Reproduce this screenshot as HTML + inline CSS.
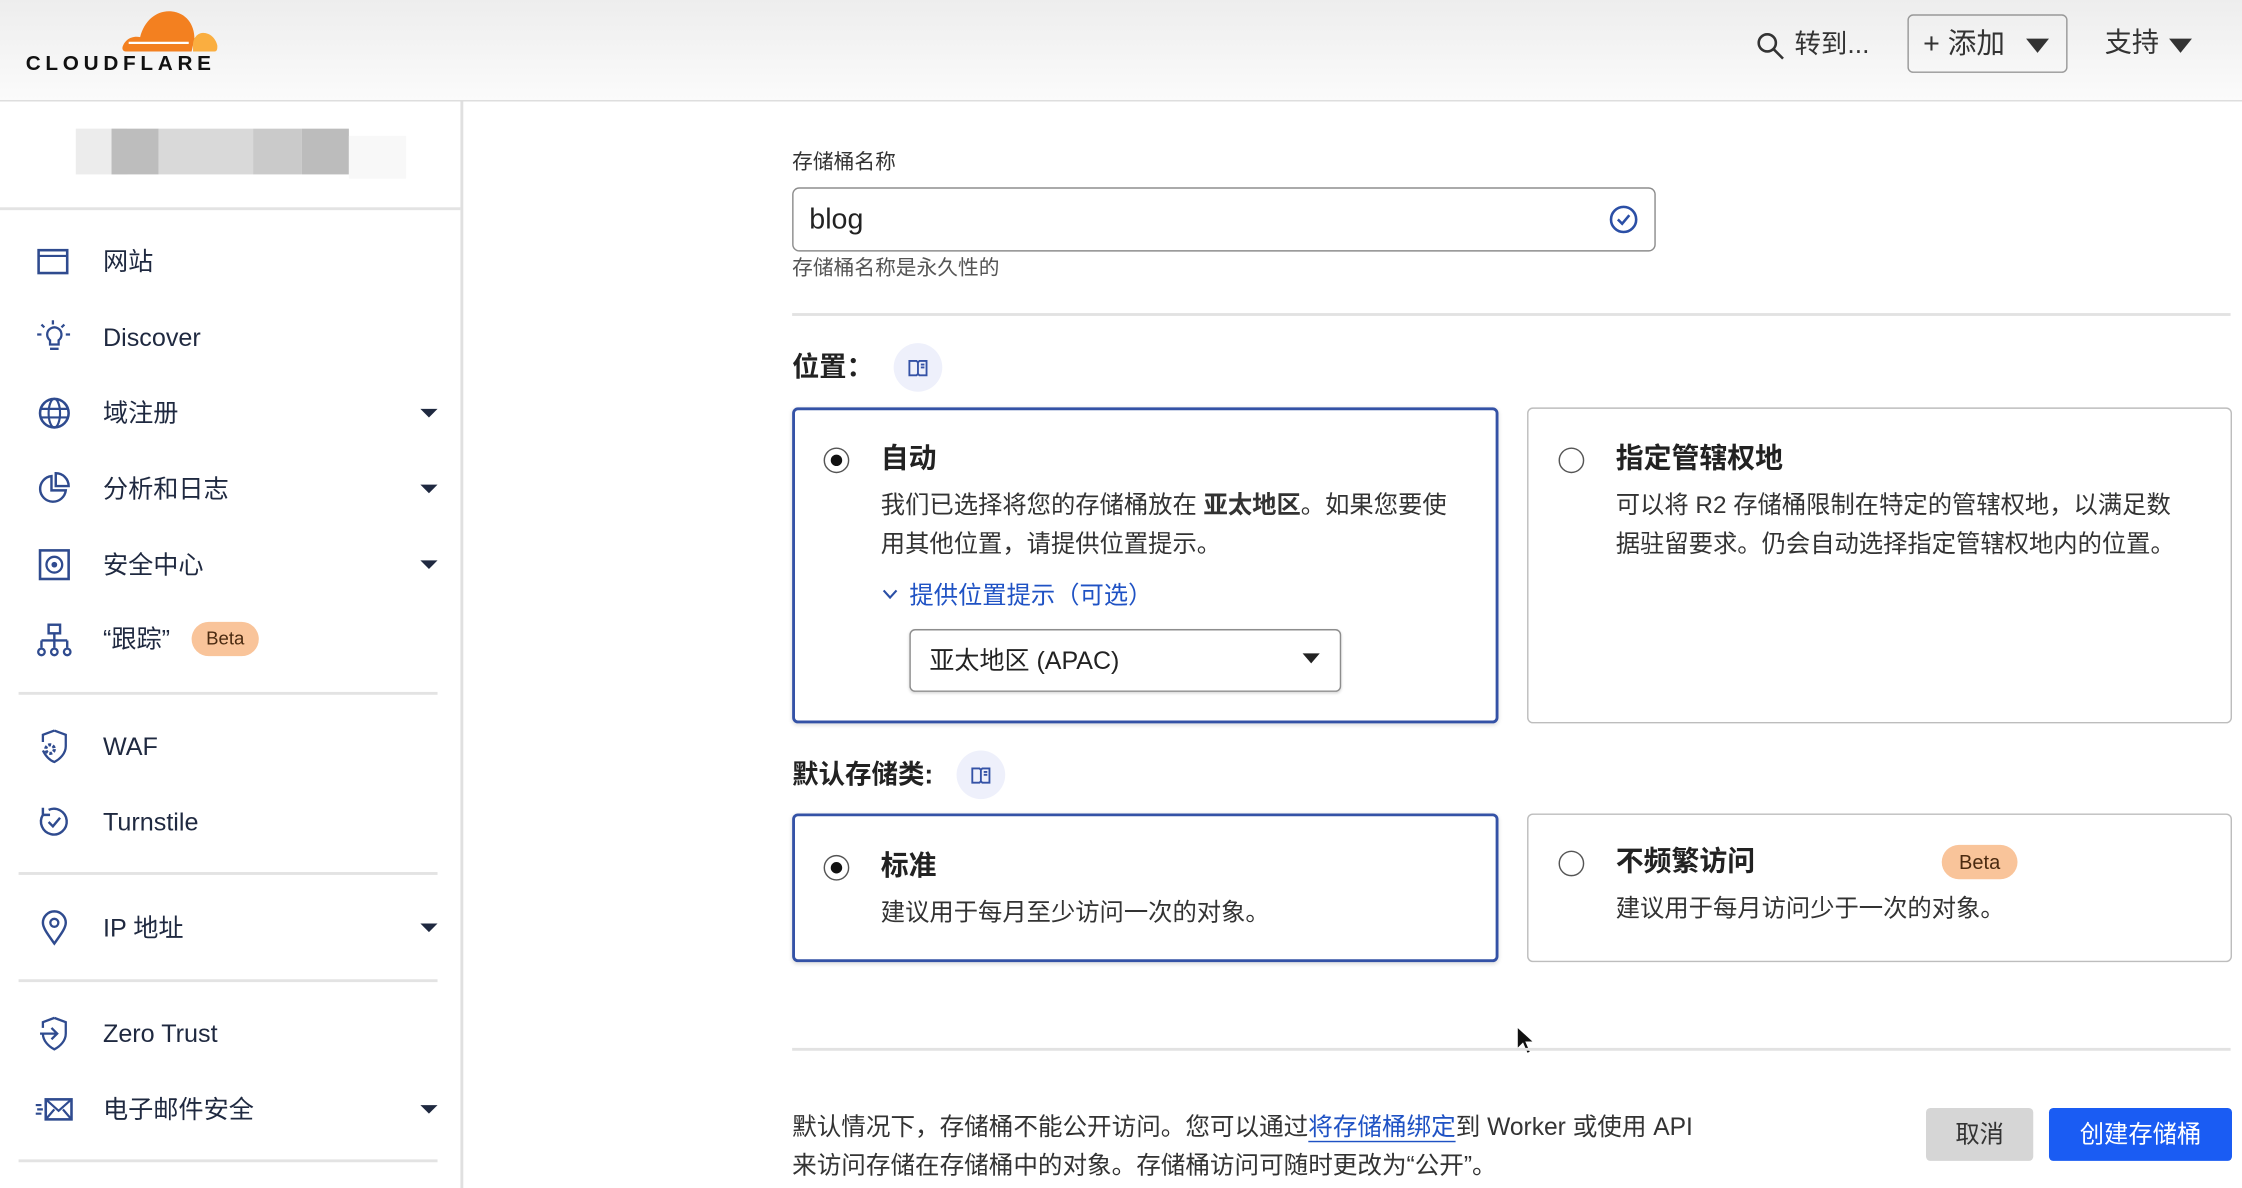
<!DOCTYPE html>
<html><head><meta charset="utf-8">
<style>
html,body{margin:0;padding:0;width:2242px;height:1188px;overflow:hidden;background:#fff}
#w{position:absolute;left:0;top:0;width:1568px;height:831px;transform:scale(1.42985,1.42960);transform-origin:0 0;font-family:"Liberation Sans","Noto Sans CJK SC",sans-serif;color:#222}
.a{position:absolute}
.t{position:absolute;height:30px;line-height:30px;white-space:nowrap}
.nav{left:72px;font-size:17.6px;color:#1f2940}
.ic{position:absolute;left:25px;width:26px;height:26px}
.car{position:absolute;left:294px;width:0;height:0;border-left:6px solid transparent;border-right:6px solid transparent;border-top:6px solid #1f2940}
.div{position:absolute;left:13px;width:293px;height:2px;background:#e3e3e3}
.card{position:absolute;border:1.5px solid #bdbdbd;border-radius:4px;box-sizing:border-box}
.sel{border:2px solid #3452a6;box-shadow:0 1px 3px rgba(0,0,0,.15)}
.radio{position:absolute;width:18px;height:18px;border:1.5px solid #555;border-radius:50%;box-sizing:border-box}
.radio.on::after{content:"";position:absolute;left:3.5px;top:3.5px;width:8px;height:8px;border-radius:50%;background:#111}
.bk{position:absolute;width:34px;height:34px;border-radius:50%;background:#eef0fb}
.p{font-size:17px;color:#333}
</style></head><body><div id="w">
<!-- header -->
<div class="a" style="left:0;top:0;width:1568px;height:70px;background:linear-gradient(#ededed,#fbfbfb);border-bottom:1.5px solid #dcdcdc"></div>
<svg class="a" style="left:84px;top:3px" width="70" height="34" viewBox="0 0 70 34">
<path d="M46 33 H4 C2 33 1 31 2 29 C4 24 9 22 14 23 C17 11 26 4 36 5 C46 6 52 14 52 24 L50 33 Z" fill="#f38020"/>
<path d="M51 33 H66 C68 33 68 31 68 29 C67 24 63 20 58 20 C54 20 51 24 51 28 Z" fill="#faae40"/>
<path d="M6 27 H48" stroke="#fff" stroke-width="1.6"/>
</svg>
<div class="t" style="left:18px;top:30px;font-size:14.5px;font-weight:bold;letter-spacing:3.3px;color:#111">CLOUDFLARE</div>
<svg class="a" style="left:1228px;top:22px" width="22" height="22" viewBox="0 0 22 22"><circle cx="8" cy="8" r="6" fill="none" stroke="#333" stroke-width="1.8"/><path d="M12.5 12.5 L19 19" stroke="#333" stroke-width="1.8"/></svg>
<div class="t" style="left:1255px;top:16px;font-size:18.5px;color:#333">转到...</div>
<div class="a" style="left:1334px;top:10px;width:112px;height:41px;border:1.5px solid #999;border-radius:4px;box-sizing:border-box"></div>
<div class="t" style="left:1345px;top:16px;font-size:20px;color:#333">+ 添加</div>
<div class="a" style="left:1417px;top:27px;border-left:8px solid transparent;border-right:8px solid transparent;border-top:10px solid #333"></div>
<div class="t" style="left:1472px;top:16px;font-size:19px;color:#333">支持</div>
<div class="a" style="left:1517px;top:27px;border-left:8px solid transparent;border-right:8px solid transparent;border-top:10px solid #333"></div>
<!-- sidebar -->
<div class="a" style="left:322px;top:71px;width:2px;height:760px;background:#e0e0e0"></div>
<div class="a" style="left:53px;top:90px;width:36px;height:32px;background:#ececec"></div>
<div class="a" style="left:78px;top:90px;width:33px;height:32px;background:#bdbdbd"></div>
<div class="a" style="left:111px;top:90px;width:66px;height:32px;background:#d9d9d9"></div>
<div class="a" style="left:177px;top:90px;width:34px;height:32px;background:#cacaca"></div>
<div class="a" style="left:211px;top:90px;width:33px;height:32px;background:#bcbcbc"></div>
<div class="a" style="left:244px;top:95px;width:40px;height:30px;background:#f8f8f8"></div>
<div class="a" style="left:0;top:145px;width:322px;height:2px;background:#e3e3e3"></div>

<svg class="ic" style="top:170px" viewBox="0 0 26 26"><rect x="2" y="5" width="20" height="16" fill="none" stroke="#2f4b8f" stroke-width="1.8"/><path d="M2 9 H22" stroke="#2f4b8f" stroke-width="1.5"/></svg>
<div class="t nav" style="top:168px">网站</div>
<svg class="ic" style="top:223px" viewBox="0 0 26 26"><path d="M8 11 a5 5 0 1 1 8 4 v3 h-6 v-3 a5 5 0 0 1 -2 -4z M10 21 h6 M12 1 v3 M4 4 l2 2 M20 4 l-2 2 M1 11 h3 M21 11 h3" fill="none" stroke="#2f4b8f" stroke-width="1.6"/></svg>
<div class="t nav" style="top:221px">Discover</div>
<svg class="ic" style="top:276px" viewBox="0 0 26 26"><circle cx="13" cy="13" r="10" fill="none" stroke="#2f4b8f" stroke-width="1.8"/><ellipse cx="13" cy="13" rx="4" ry="10" fill="none" stroke="#2f4b8f" stroke-width="1.5"/><path d="M3 10 H23 M3 16 H23" stroke="#2f4b8f" stroke-width="1.5"/></svg>
<div class="t nav" style="top:274px">域注册</div><div class="car" style="top:286px"></div>
<svg class="ic" style="top:329px" viewBox="0 0 26 26"><path d="M11 4 a9 9 0 1 0 10 10 H11 Z M14 2 a9 9 0 0 1 9 9 H14 Z" fill="none" stroke="#2f4b8f" stroke-width="1.7"/></svg>
<div class="t nav" style="top:327px">分析和日志</div><div class="car" style="top:339px"></div>
<svg class="ic" style="top:382px" viewBox="0 0 26 26"><rect x="3" y="3" width="20" height="20" fill="none" stroke="#2f4b8f" stroke-width="1.8"/><circle cx="13" cy="13" r="5.5" fill="none" stroke="#2f4b8f" stroke-width="1.6"/><circle cx="13" cy="13" r="2" fill="#2f4b8f"/></svg>
<div class="t nav" style="top:380px">安全中心</div><div class="car" style="top:392px"></div>
<svg class="ic" style="top:435px" viewBox="0 0 26 26"><rect x="9" y="2" width="8" height="6" fill="none" stroke="#2f4b8f" stroke-width="1.7"/><path d="M13 8 v5 M4 13 h18 M4 13 v5 M13 13 v5 M22 13 v5" fill="none" stroke="#2f4b8f" stroke-width="1.7"/><circle cx="4" cy="21" r="2.3" fill="none" stroke="#2f4b8f" stroke-width="1.6"/><circle cx="13" cy="21" r="2.3" fill="none" stroke="#2f4b8f" stroke-width="1.6"/><circle cx="22" cy="21" r="2.3" fill="none" stroke="#2f4b8f" stroke-width="1.6"/></svg>
<div class="t nav" style="top:432px">“跟踪”</div>
<div class="a" style="left:134px;top:435px;width:47px;height:24px;border-radius:12px;background:#f9c49a;font-size:13px;line-height:24px;text-align:center;color:#4a2a10">Beta</div>
<div class="div" style="top:484px"></div>
<svg class="ic" style="top:509px" viewBox="0 0 26 26"><path d="M13 2 L21 5 V13 C21 18 17 22 13 24 C10 23 7 20 5 16 M5 10 V5 L13 2" fill="none" stroke="#2f4b8f" stroke-width="1.6"/><circle cx="10" cy="15" r="3" fill="none" stroke="#2f4b8f" stroke-width="2.2" stroke-dasharray="2 1.2"/></svg>
<div class="t nav" style="top:507px">WAF</div>
<svg class="ic" style="top:562px" viewBox="0 0 26 26"><path d="M5 8 A9 9 0 1 0 9 4.5 M5 3 V8 H10" fill="none" stroke="#2f4b8f" stroke-width="1.7"/><path d="M9 13 l3 3 l5 -6" fill="none" stroke="#2f4b8f" stroke-width="1.7"/></svg>
<div class="t nav" style="top:560px">Turnstile</div>
<div class="div" style="top:610px"></div>
<svg class="ic" style="top:636px" viewBox="0 0 26 26"><path d="M13 24 C8 17 5 13 5 9.5 A8 8 0 0 1 21 9.5 C21 13 18 17 13 24Z" fill="none" stroke="#2f4b8f" stroke-width="1.7"/><circle cx="13" cy="9.5" r="2.8" fill="none" stroke="#2f4b8f" stroke-width="1.6"/></svg>
<div class="t nav" style="top:634px">IP 地址</div><div class="car" style="top:646px"></div>
<div class="div" style="top:685px"></div>
<svg class="ic" style="top:710px" viewBox="0 0 26 26"><path d="M13 2 L21 5 V13 C21 18 17 22 13 24 C9 22 5 18 5 13 M5 9 V5 L13 2" fill="none" stroke="#2f4b8f" stroke-width="1.6"/><path d="M3 13 H15 M11 9 L15 13 L11 17" fill="none" stroke="#2f4b8f" stroke-width="1.6"/></svg>
<div class="t nav" style="top:708px">Zero Trust</div>
<svg class="ic" style="top:763px;left:24px;width:28px" viewBox="0 0 28 26"><rect x="8" y="6" width="18" height="14" fill="none" stroke="#2f4b8f" stroke-width="1.8"/><path d="M8 6 L17 14 L26 6 M8 20 L14 13 M26 20 L20 13 M1 10 h4 M2 13 h4 M1 16 h4" fill="none" stroke="#2f4b8f" stroke-width="1.5"/></svg>
<div class="t nav" style="top:761px">电子邮件安全</div><div class="car" style="top:773px"></div>
<div class="div" style="top:811px"></div>

<!-- main -->
<div class="t" style="left:554px;top:99px;font-size:14.5px;color:#333">存储桶名称</div>
<div class="a" style="left:554px;top:131px;width:604px;height:45px;border:1.5px solid #8d8d8d;border-radius:5px;box-sizing:border-box"></div>
<div class="t" style="left:566px;top:139px;font-size:20px;color:#222">blog</div>
<svg class="a" style="left:1125px;top:143px" width="21" height="21" viewBox="0 0 21 21"><circle cx="10.5" cy="10.5" r="8.8" fill="none" stroke="#2b4fa6" stroke-width="1.8"/><path d="M6.5 10.5 l3 3 l5 -6" fill="none" stroke="#2b4fa6" stroke-width="1.8"/></svg>
<div class="t" style="left:554px;top:173px;font-size:14.5px;color:#555">存储桶名称是永久性的</div>
<div class="a" style="left:554px;top:219px;width:1006px;height:2px;background:#e2e2e2"></div>

<div class="t" style="left:554px;top:243px;font-size:19px;font-weight:bold;color:#222">位置：</div>
<div class="bk" style="left:625px;top:240px"></div>
<svg class="a" style="left:635px;top:251px" width="14" height="13" viewBox="0 0 14 13"><path d="M1 1.5 h5 l1 1 l1 -1 h5 v10 h-5 l-1 -1 l-1 1 h-5z M7 2.5 v8 M9 4 h2.5 M9 6 h2.5" fill="none" stroke="#3452a6" stroke-width="1.3"/></svg>

<div class="card sel" style="left:554px;top:285px;width:494px;height:221px"></div>
<div class="radio on" style="left:576px;top:313px"></div>
<div class="t" style="left:616px;top:306px;font-size:19.5px;font-weight:bold;color:#222">自动</div>
<div class="t p" style="left:616px;top:339px">我们已选择将您的存储桶放在 <b>亚太地区</b>。如果您要使</div>
<div class="t p" style="left:616px;top:366px">用其他位置，请提供位置提示。</div>
<svg class="a" style="left:616px;top:411px" width="13" height="10" viewBox="0 0 13 10"><path d="M2 2 L6.5 7 L11 2" fill="none" stroke="#2b4fa6" stroke-width="1.5"/></svg>
<div class="t" style="left:636px;top:402px;font-size:17px;color:#1f52c4">提供位置提示（可选）</div>
<div class="a" style="left:636px;top:440px;width:302px;height:44px;border:1.5px solid #8d8d8d;border-radius:4px;box-sizing:border-box;box-shadow:0 1px 2px rgba(0,0,0,.15)"></div>
<div class="t" style="left:650px;top:447px;font-size:17.5px;color:#222">亚太地区 (APAC)</div>
<div class="a" style="left:911px;top:457px;border-left:6px solid transparent;border-right:6px solid transparent;border-top:7px solid #222"></div>

<div class="card" style="left:1068px;top:285px;width:493px;height:221px"></div>
<div class="radio" style="left:1090px;top:313px"></div>
<div class="t" style="left:1130px;top:306px;font-size:19.5px;font-weight:bold;color:#222">指定管辖权地</div>
<div class="t p" style="left:1130px;top:339px">可以将 R2 存储桶限制在特定的管辖权地，以满足数</div>
<div class="t p" style="left:1130px;top:366px">据驻留要求。仍会自动选择指定管辖权地内的位置。</div>

<div class="t" style="left:554px;top:527px;font-size:18.5px;font-weight:bold;color:#222">默认存储类:</div>
<div class="bk" style="left:669px;top:525px"></div>
<svg class="a" style="left:679px;top:536px" width="14" height="13" viewBox="0 0 14 13"><path d="M1 1.5 h5 l1 1 l1 -1 h5 v10 h-5 l-1 -1 l-1 1 h-5z M7 2.5 v8 M9 4 h2.5 M9 6 h2.5" fill="none" stroke="#3452a6" stroke-width="1.3"/></svg>

<div class="card sel" style="left:554px;top:569px;width:494px;height:104px"></div>
<div class="radio on" style="left:576px;top:598px"></div>
<div class="t" style="left:616px;top:591px;font-size:19.5px;font-weight:bold;color:#222">标准</div>
<div class="t p" style="left:616px;top:624px">建议用于每月至少访问一次的对象。</div>

<div class="card" style="left:1068px;top:569px;width:493px;height:104px"></div>
<div class="radio" style="left:1090px;top:595px"></div>
<div class="t" style="left:1130px;top:588px;font-size:19.5px;font-weight:bold;color:#222">不频繁访问</div>
<div class="a" style="left:1358px;top:591px;width:53px;height:24px;border-radius:12px;background:#f9c49a;font-size:14px;line-height:24px;text-align:center;color:#4a2a10">Beta</div>
<div class="t p" style="left:1130px;top:621px">建议用于每月访问少于一次的对象。</div>

<svg class="a" style="left:1060px;top:717px" width="14" height="22" viewBox="0 0 14 22"><path d="M1 1 V17 L5 13 L8 20 L10.5 19 L7.5 12 H13 Z" fill="#111" stroke="#fff" stroke-width="1"/></svg>

<div class="a" style="left:554px;top:733px;width:1006px;height:2px;background:#e2e2e2"></div>
<div class="t" style="left:554px;top:773px;font-size:17.2px;color:#333">默认情况下，存储桶不能公开访问。您可以通过<span style="color:#1f52c4;border-bottom:1px solid #1f52c4">将存储桶绑定</span>到 Worker 或使用 API</div>
<div class="t" style="left:554px;top:800px;font-size:17.2px;color:#333">来访问存储在存储桶中的对象。存储桶访问可随时更改为“公开”。</div>
<div class="a" style="left:1347px;top:775px;width:75px;height:37px;background:#d6d6d6;border-radius:3px;font-size:17px;line-height:37px;text-align:center;color:#333">取消</div>
<div class="a" style="left:1433px;top:775px;width:128px;height:37px;background:#1a5cf3;border-radius:3px;font-size:17px;line-height:37px;text-align:center;color:#fff">创建存储桶</div>
</div></body></html>
